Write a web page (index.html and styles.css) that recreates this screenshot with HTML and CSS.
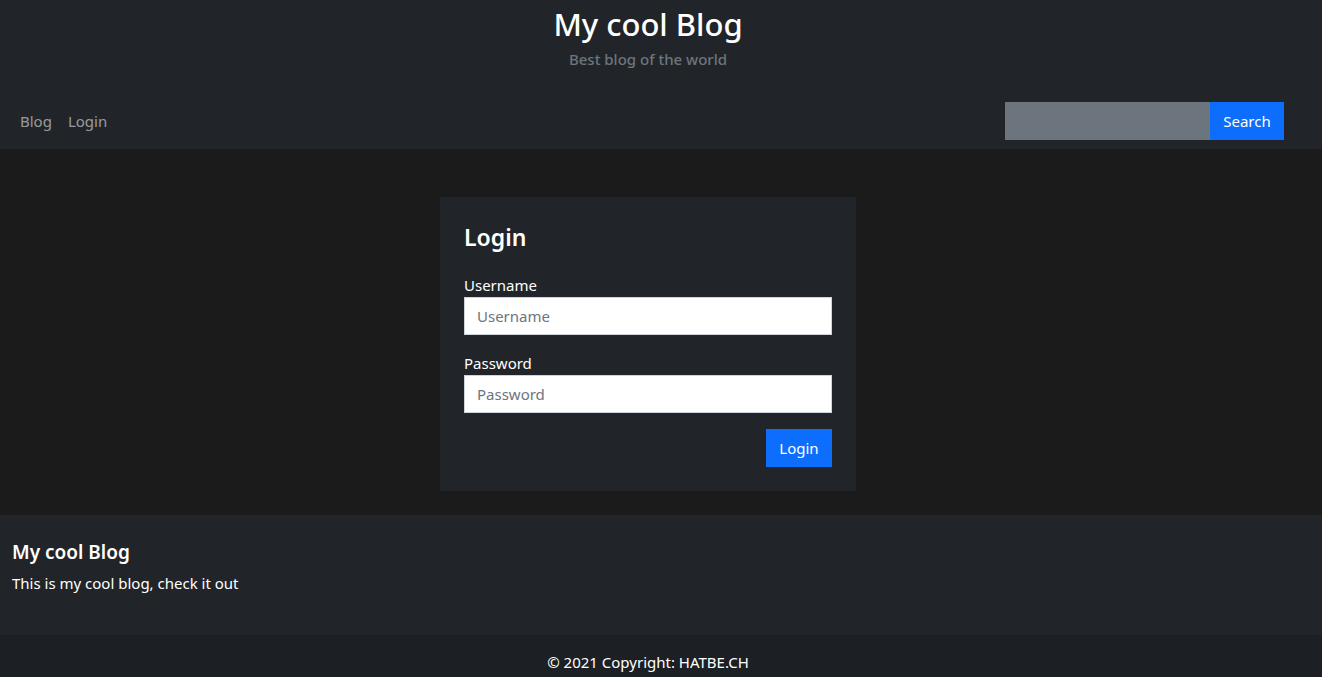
FILE: index.html
```html
<!DOCTYPE html>
<html lang="en">
<head>
<meta charset="utf-8">
<title>My cool Blog</title>
<link rel="stylesheet" href="styles.css">
</head>
<body>
<header class="masthead">
  <h1 class="site-title">My cool Blog</h1>
  <p class="site-subtitle">Best blog of the world</p>
</header>
<nav class="navbar">
  <ul class="nav-links">
    <li><a href="#" class="nav-link">Blog</a></li>
    <li><a href="#" class="nav-link">Login</a></li>
  </ul>
  <form class="search-form">
    <input class="search-input" type="search" aria-label="Search">
    <button class="btn btn-primary btn-search" type="button">Search</button>
  </form>
</nav>
<main class="main">
  <section class="card">
    <h2 class="card-title">Login</h2>
    <div class="field">
      <label class="field-label" for="u">Username</label>
      <input class="field-input" id="u" type="text" placeholder="Username">
    </div>
    <div class="field">
      <label class="field-label" for="p">Password</label>
      <input class="field-input" id="p" type="password" placeholder="Password">
    </div>
    <div class="actions">
      <button class="btn btn-primary btn-login" type="button">Login</button>
    </div>
  </section>
</main>
<footer class="footer">
  <div class="footer-body">
    <h3 class="footer-title">My cool Blog</h3>
    <p class="footer-text">This is my cool blog, check it out</p>
  </div>
  <div class="copyright">© 2021 Copyright: HATBE.CH</div>
</footer>
</body>
</html>
```
FILE: styles.css
```css
* { box-sizing: border-box; }
html, body { margin: 0; padding: 0; }
body {
  font-family: "Noto Sans", "Open Sans", sans-serif;
  font-size: 15px;
  line-height: 1.5;
  color: #fff;
  background: #1c1c1c;
}
.masthead {
  background: #212529;
  text-align: center;
  padding: 2px 26px 25px 0;
  height: 95px;
}
.site-title {
  margin: 0;
  font-size: 31px;
  font-weight: 500;
  line-height: 44px;
}
.site-subtitle {
  margin: 2px 0 0;
  color: #6c757d;
  font-size: 15px;
  font-weight: 500;
  line-height: 22px;
}
.navbar {
  background: #212529;
  display: flex;
  align-items: center;
  justify-content: space-between;
  padding: 0 38px 2px 12px;
  height: 54px;
}
.nav-links {
  list-style: none;
  margin: 0;
  padding: 0;
  display: flex;
}
.nav-link {
  display: block;
  padding: 8px 8px;
  color: rgba(255,255,255,0.55);
  text-decoration: none;
  font-size: 15px;
}
.search-form { display: flex; }
.search-input {
  width: 205px;
  height: 38px;
  border: 0;
  background: #6c757d;
  color: #fff;
  padding: 6px 12px;
  font: inherit;
}
.btn {
  height: 38px;
  border: 0;
  padding: 6px 12px;
  font: inherit;
  font-size: 15px;
  color: #fff;
  cursor: pointer;
}
.btn-search { width: 74px; padding: 6px 0; }
.btn-login { width: 66px; padding: 6px 0; }
.btn-primary { background: #0d6efd; }
.main {
  background: #1b1b1b;
  padding: 48px 26px 24px 0;
  display: flex;
  justify-content: center;
}
.card {
  width: 416px;
  background: #212529;
  padding: 24px;
}
.card-title {
  margin: 0 0 20px;
  font-size: 23px;
  font-weight: 600;
  line-height: 32px;
}
.field { margin-bottom: 16px; }
.field-label {
  display: block;
  font-size: 15px;
  line-height: 24px;
}
.field-input {
  display: block;
  width: 100%;
  height: 38px;
  border: 1px solid #ced4da;
  background: #fff;
  padding: 6px 12px;
  font: inherit;
  font-size: 15px;
  color: #212529;
}
.field-input::placeholder { color: #6c757d; }
.actions { display: flex; justify-content: flex-end; }
.footer-body {
  background: #212529;
  padding: 24px 12px 32px;
  height: 120px;
}
.footer-title {
  margin: 0 0 6px;
  font-size: 19px;
  font-weight: 600;
  line-height: 26px;
}
.footer-text {
  margin: 0;
  font-size: 15px;
  line-height: 24px;
}
.copyright {
  background: #1c1f23;
  text-align: center;
  padding: 15px 26px 16px 0;
  font-size: 15px;
  line-height: 24px;
}
```
